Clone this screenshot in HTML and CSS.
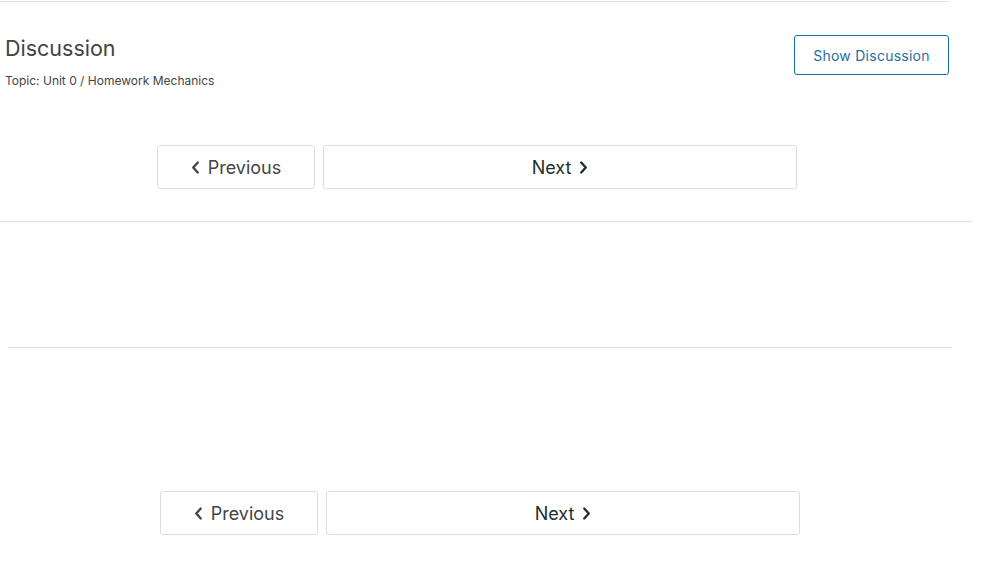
FILE: index.html
```html
<!DOCTYPE html>
<html>
<head>
<meta charset="utf-8">
<link rel="stylesheet" href="styles.css">
</head>
<body>
<div class="page">
  <section class="unit">
    <div class="discussion">
      <div class="disc-text">
        <h3 class="disc-title">Discussion</h3>
        <div class="disc-topic">Topic: Unit 0 / Homework Mechanics</div>
      </div>
      <button class="show-btn">Show Discussion</button>
    </div>
    <nav class="seq-nav">
      <button class="nav-btn prev"><svg class="chev" viewBox="0 0 10 14" width="9" height="13"><path d="M7.5 1.5 L2.5 7 L7.5 12.5" fill="none" stroke="currentColor" stroke-width="2.6" stroke-linecap="round" stroke-linejoin="round"/></svg><span>Previous</span></button>
      <button class="nav-btn next"><span>Next</span><svg class="chev" viewBox="0 0 10 14" width="9" height="13"><path d="M2.5 1.5 L7.5 7 L2.5 12.5" fill="none" stroke="currentColor" stroke-width="2.6" stroke-linecap="round" stroke-linejoin="round"/></svg></button>
    </nav>
  </section>
  <div class="gap-block"></div>
  <section class="bottom">
    <nav class="seq-nav">
      <button class="nav-btn prev"><svg class="chev" viewBox="0 0 10 14" width="9" height="13"><path d="M7.5 1.5 L2.5 7 L7.5 12.5" fill="none" stroke="currentColor" stroke-width="2.6" stroke-linecap="round" stroke-linejoin="round"/></svg><span>Previous</span></button>
      <button class="nav-btn next"><span>Next</span><svg class="chev" viewBox="0 0 10 14" width="9" height="13"><path d="M2.5 1.5 L7.5 7 L2.5 12.5" fill="none" stroke="currentColor" stroke-width="2.6" stroke-linecap="round" stroke-linejoin="round"/></svg></button>
    </nav>
  </section>
</div>
</body>
</html>
```
FILE: styles.css
```css
html, body {
  margin: 0;
  padding: 0;
  background: #fff;
}
body {
  font-family: Inter, "Noto Sans", "Liberation Sans", sans-serif;
  color: #454545;
  width: 988px;
  height: 574px;
  overflow: hidden;
}
.page {
  padding-top: 1px;
}
.unit {
  width: 972px;
  border-bottom: 1px solid #e2e2e2;
}
.discussion {
  width: 949px;
  box-sizing: border-box;
  border-top: 1px solid #e2e2e2;
  display: flex;
  justify-content: space-between;
  align-items: flex-start;
  padding-left: 5px;
}
.disc-title {
  margin: 0;
  padding-top: 32px;
  font-size: 21.5px;
  font-weight: 400;
  line-height: 28px;
  color: #434343;
}
.disc-topic {
  margin-top: 11px;
  font-size: 12px;
  line-height: 16px;
  color: #454545;
}
.show-btn {
  margin-top: 33px;
  width: 155px;
  height: 40px;
  background: #fff;
  border: 1px solid #0e72a8;
  border-radius: 3px;
  color: #1f6fa0;
  font-family: inherit;
  font-size: 14px;
  letter-spacing: 0.25px;
  padding: 0;
}
.seq-nav {
  display: flex;
  gap: 8px;
  margin-left: 157px;
  margin-top: 56px;
  margin-bottom: 32px;
}
.nav-btn {
  height: 44px;
  background: #fff;
  border: 1px solid #dedede;
  border-radius: 3px;
  font-family: inherit;
  font-size: 18px;
  display: flex;
  align-items: center;
  justify-content: center;
  gap: 8px;
  padding: 0;
}
.nav-btn.prev {
  width: 158px;
  color: #454545;
}
.nav-btn.next {
  width: 474px;
  color: #1e2f2b;
}
.chev {
  display: block;
}
.gap-block {
  height: 125px;
  margin-left: 8px;
  width: 944px;
  border-bottom: 1px solid #dcdcdc;
}
.bottom .seq-nav {
  margin-left: 160px;
  margin-top: 143px;
}
```
